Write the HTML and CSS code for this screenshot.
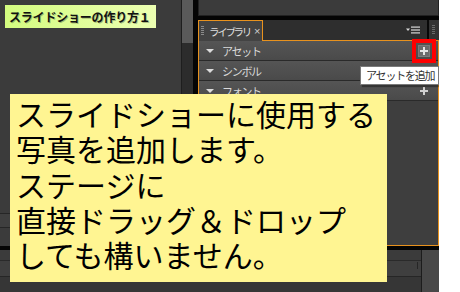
FILE: index.html
```html
<!DOCTYPE html>
<html lang="ja">
<head>
<meta charset="utf-8">
<title>スライドショーの作り方１</title>
<link rel="stylesheet" href="styles.css">
</head>
<body>
<div class="app">
  <div class="top">
    <div class="stage-col">
      <div class="stage"></div>
      <div class="strip"></div>
      <div class="strip2"></div>
    </div>
    <div class="vscroll"><div class="thumb"></div></div>
    <div class="gap"></div>
    <div class="right-col">
      <div class="top-panel"></div>
      <div class="library">
        <div class="tabbar">
          <div class="tab">
            <span class="grip"></span>
            <span class="tab-label">ライブラリ</span>
            <span class="tab-close">×</span>
          </div>
          <div class="tabfill">
            <svg class="menu-icon" width="14" height="8" viewBox="0 0 14 8">
              <path d="M0 2.5h4l-2 2.5z" fill="#d8d8d8"/>
              <rect x="5" y="0.5" width="9" height="1.2" fill="#d8d8d8"/>
              <rect x="5" y="3.4" width="9" height="1.2" fill="#d8d8d8"/>
              <rect x="5" y="6.3" width="9" height="1.2" fill="#d8d8d8"/>
            </svg>
          </div>
          <div class="tabgap"></div>
          <div class="tabgrip"><span class="grip dark"></span></div>
        </div>
        <div class="lib-body">
          <div class="row">
            <span class="tri"></span><span class="row-label">アセット</span>
            <span class="add-btn">
              <svg width="8" height="8" viewBox="0 0 8 8"><path d="M3 0h2v3h3v2H5v3H3V5H0V3h3z" fill="#e4e4e4"/></svg>
            </span>
          </div>
          <div class="row">
            <span class="tri"></span><span class="row-label">シンボル</span>
          </div>
          <div class="row">
            <span class="tri"></span><span class="row-label">フォント</span>
            <span class="add-plain">
              <svg width="8" height="8" viewBox="0 0 8 8"><path d="M3 0h2v3h3v2H5v3H3V5H0V3h3z" fill="#d0d0d0"/></svg>
            </span>
          </div>
        </div>
      </div>
    </div>
  </div>
  <div class="band"></div>
  <div class="bottom">
    <div class="bmain">
      <div class="brow1"></div>
      <div class="brow2"><span class="tick"></span></div>
      <div class="brow3"></div>
    </div>
    <div class="bside"></div>
  </div>

  <div class="title-label">スライドショーの作り方１</div>
  <div class="highlight"></div>
  <div class="tooltip">アセットを追加</div>
  <div class="note">
    <div class="note-line">スライドショーに使用する</div>
    <div class="note-line">写真を追加します。</div>
    <div class="note-line">ステージに</div>
    <div class="note-line">直接ドラッグ＆ドロップ</div>
    <div class="note-line">しても構いません。</div>
  </div>
</div>
</body>
</html>
```
FILE: styles.css
```css
html, body {
  margin: 0;
  padding: 0;
  background: #ffffff;
}
body {
  font-family: "Noto Sans CJK JP", "Noto Sans", sans-serif;
}
.app {
  position: relative;
  width: 439px;
  height: 292px;
  background: #050505;
  display: flex;
  flex-direction: column;
  overflow: hidden;
}
.top {
  height: 246px;
  display: flex;
}
.stage-col {
  width: 181px;
  display: flex;
  flex-direction: column;
  background: #3b3b3b;
}
.stage {
  flex: 1;
}
.strip {
  height: 13px;
  border-top: 1px solid #262626;
  border-bottom: 1px solid #262626;
  background: #3f3f3f;
}
.strip2 {
  height: 18px;
  background: #3b3b3b;
}
.vscroll {
  width: 11px;
  background: #2c2c2c;
  border-left: 1px solid #1e1e1e;
}
.thumb {
  height: 43px;
  background: #5a5a5a;
}
.gap {
  width: 5px;
  background: #050505;
}
.right-col {
  flex: 1;
  display: flex;
  flex-direction: column;
  gap: 4px;
}
.top-panel {
  height: 15px;
  background: #3b3b3b;
  border: 1px solid #222;
  border-top: none;
}
.library {
  flex: 1;
  display: flex;
  flex-direction: column;
}
.tabbar {
  height: 21px;
  display: flex;
}
.tab {
  width: 63px;
  background: #434343;
  border: 1px solid #e8921e;
  border-bottom: none;
  display: flex;
  align-items: center;
  color: #dedede;
  font-size: 10.5px;
  white-space: nowrap;
}
.grip {
  display: inline-block;
  flex: none;
  width: 3px;
  height: 10px;
  margin-left: 2px;
  background: repeating-linear-gradient(to bottom, #8a8a8a 0 1px, transparent 1px 2px);
}
.grip.dark {
  background: repeating-linear-gradient(to bottom, #6a6a6a 0 1px, transparent 1px 2px);
}
.tab-label {
  margin-left: 5px;
  letter-spacing: -2.3px;
}
.tab-close {
  margin-left: 4px;
  font-family: "Liberation Sans", sans-serif;
  font-size: 11px;
  color: #cfcfcf;
}
.tabfill {
  flex: 1;
  background: #2e2e2e;
  border-bottom: 1px solid #e8921e;
  display: flex;
  align-items: center;
  justify-content: flex-end;
  padding-right: 7px;
}
.menu-icon {
  display: block;
}
.tabgap {
  width: 2px;
  background: #080808;
  border-bottom: 1px solid #e8921e;
}
.tabgrip {
  width: 10px;
  background: #333;
  border-bottom: 1px solid #e8921e;
  display: flex;
  align-items: center;
}
.tabgrip .grip {
  margin-left: 3px;
}
.lib-body {
  flex: 1;
  background: #3e3e3e;
  border: 1px solid #e8921e;
  border-top: none;
}
.row {
  height: 19px;
  border-bottom: 1px solid #2a2a2a;
  background: linear-gradient(#555555, #4a4a4a);
  display: flex;
  align-items: center;
  color: #dadada;
  font-size: 11px;
  white-space: nowrap;
}
.tri {
  width: 0;
  height: 0;
  margin-left: 7px;
  border-left: 4px solid transparent;
  border-right: 4px solid transparent;
  border-top: 4px solid #dcdcdc;
}
.row-label {
  margin-left: 8px;
  letter-spacing: -1.3px;
}
.add-btn {
  margin-left: auto;
  margin-right: 8px;
  width: 12px;
  height: 12px;
  box-sizing: border-box;
  background: #6c6c6c;
  border: 1px solid #7c7c7c;
  display: flex;
  align-items: center;
  justify-content: center;
}
.add-btn svg, .add-plain svg {
  display: block;
}
.add-plain {
  margin-left: auto;
  margin-right: 10px;
}
.band {
  height: 4px;
  background: #050505;
}
.bottom {
  flex: 1;
  display: flex;
}
.bmain {
  flex: 1;
  background: #3b3b3b;
  display: flex;
  flex-direction: column;
}
.brow1 {
  height: 10px;
  border-bottom: 1px solid #2a2a2a;
}
.brow2 {
  height: 15px;
  border-bottom: 1px solid #262626;
  background: #3f3f3f;
  position: relative;
}
.tick {
  position: absolute;
  right: 3px;
  top: 1px;
  width: 1px;
  height: 7px;
  background: #262626;
}
.brow3 {
  flex: 1;
  background: #363636;
}
.bside {
  width: 17px;
  background: #484848;
  border-left: 1px solid #1c1c1c;
}
.title-label {
  position: absolute;
  left: 5px;
  top: 5px;
  width: 151px;
  height: 23px;
  box-sizing: border-box;
  padding-left: 4px;
  background: linear-gradient(to right, #d4fc80, #ecffb2);
  color: #111;
  font-size: 12px;
  font-weight: bold;
  line-height: 23px;
  letter-spacing: -0.2px;
  text-shadow: 1px 1px 0 rgba(0, 0, 0, 0.25);
  white-space: nowrap;
}
.highlight {
  position: absolute;
  left: 412px;
  top: 39px;
  width: 24px;
  height: 24px;
  box-sizing: border-box;
  border: 4px solid #ff0000;
}
.tooltip {
  position: absolute;
  left: 360px;
  top: 66px;
  width: 79px;
  height: 19px;
  box-sizing: border-box;
  background: #ffffff;
  border: 1px solid #7a7a7a;
  box-shadow: 2px 2px 1px rgba(0, 0, 0, 0.35);
  color: #333;
  font-size: 11px;
  line-height: 17px;
  padding-left: 5px;
  letter-spacing: -1.2px;
  white-space: nowrap;
}
.note {
  position: absolute;
  left: 10px;
  top: 94px;
  width: 377px;
  height: 188px;
  box-sizing: border-box;
  padding: 2px 0 0 6px;
  background: #fff592;
  color: #000;
  font-size: 30px;
  white-space: nowrap;
}
.note-line {
  height: 35.3px;
  line-height: 35.3px;
}
```
